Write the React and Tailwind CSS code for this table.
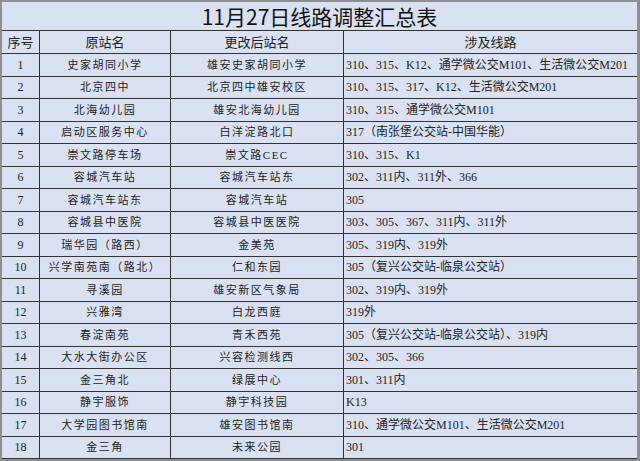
import React from "react";

const rows = [
  ["1", "史家胡同小学", "雄安史家胡同小学", "310、315、K12、通学微公交M101、生活微公交M201"],
  ["2", "北京四中", "北京四中雄安校区", "310、315、317、K12、生活微公交M201"],
  ["3", "北海幼儿园", "雄安北海幼儿园", "310、315、通学微公交M101"],
  ["4", "启动区服务中心", "白洋淀路北口", "317（南张堡公交站-中国华能）"],
  ["5", "崇文路停车场", "崇文路CEC", "310、315、K1"],
  ["6", "容城汽车站", "容城汽车站东", "302、311内、311外、366"],
  ["7", "容城汽车站东", "容城汽车站", "305"],
  ["8", "容城县中医院", "容城县中医医院", "303、305、367、311内、311外"],
  ["9", "瑞华园（路西）", "金美苑", "305、319内、319外"],
  ["10", "兴学南苑南（路北）", "仁和东园", "305（复兴公交站-临泉公交站）"],
  ["11", "寻溪园", "雄安新区气象局", "302、319内、319外"],
  ["12", "兴雅湾", "白龙西庭", "319外"],
  ["13", "春淀南苑", "青禾西苑", "305（复兴公交站-临泉公交站）、319内"],
  ["14", "大水大街办公区", "兴容检测线西", "302、305、366"],
  ["15", "金三角北", "绿展中心", "301、311内"],
  ["16", "静宇服饰", "静宇科技园", "K13"],
  ["17", "大学园图书馆南", "雄安图书馆南", "310、通学微公交M101、生活微公交M201"],
  ["18", "金三角", "未来公园", "301"],
];

const sans = "font-['Noto_Sans_CJK_SC',sans-serif]";
const serif = "font-['Liberation_Serif','Noto_Sans_CJK_SC',serif]";
const cols = "grid grid-cols-[38px_131px_173px_1fr]";

export default function App() {
  return (
    <div className="w-[640px] h-[461px] bg-[#8e8e8e] pt-[2px] pl-[2px] pr-[3px] pb-[2px]">
      <div className="h-full bg-[#d9e1f2] text-[#222]">
        <div
          className={`h-[29px] border-b border-[#333] flex items-center justify-center text-[21px] leading-none text-[#111] ${sans}`}
        >
          11月27日线路调整汇总表
        </div>
        <div className={`${cols} h-[23px] border-b border-[#333] text-[13px] ${sans}`}>
          <div className="border-r border-[#333] flex items-center justify-center">序号</div>
          <div className="border-r border-[#333] flex items-center justify-center">原站名</div>
          <div className="border-r border-[#333] flex items-center justify-center">更改后站名</div>
          <div className="flex items-center justify-center">涉及线路</div>
        </div>
        {rows.map((r) => (
          <div
            key={r[0]}
            className={`${cols} h-[22.5px] border-b border-[#333] text-[11px] ${serif}`}
          >
            <div className="border-r border-[#333] flex items-center justify-center text-[12px]">
              {r[0]}
            </div>
            <div className="border-r border-[#333] flex items-center justify-center tracking-[1.5px]">
              {r[1]}
            </div>
            <div className="border-r border-[#333] flex items-center justify-center tracking-[1.5px]">
              {r[2]}
            </div>
            <div className="flex items-center pl-[2px] whitespace-nowrap text-[12px]">{r[3]}</div>
          </div>
        ))}
      </div>
    </div>
  );
}
